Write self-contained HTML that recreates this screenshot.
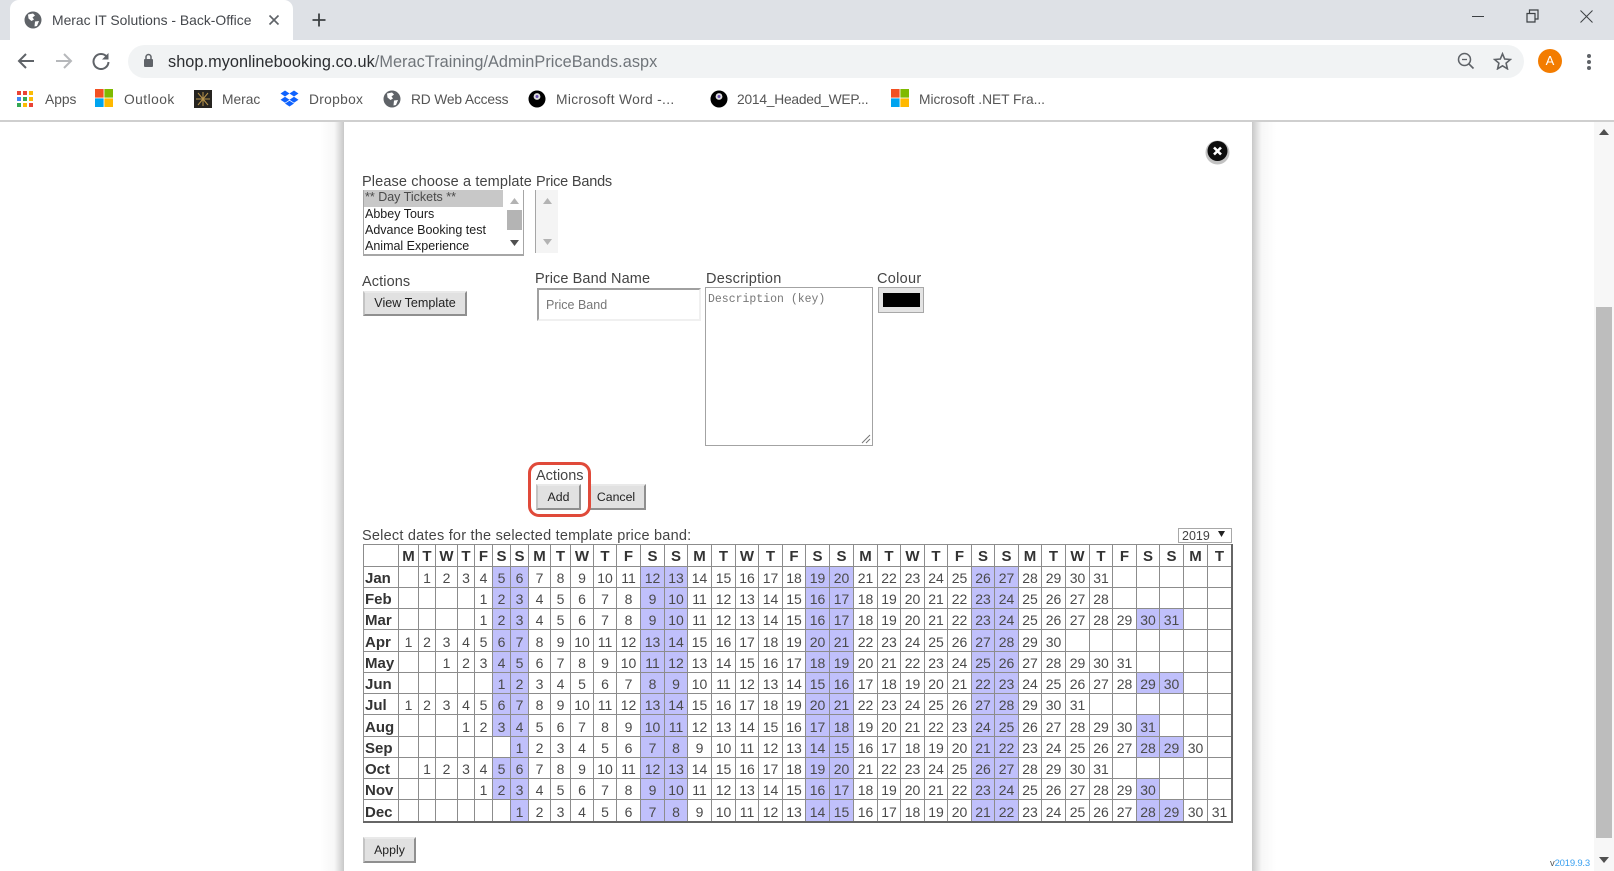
<!DOCTYPE html>
<html><head><meta charset="utf-8"><title>Merac IT Solutions - Back-Office</title>
<style>
html,body{margin:0;padding:0;background:#fff}
#r{position:relative;width:1614px;height:871px;overflow:hidden;background:#fff;font-family:"Liberation Sans",sans-serif;filter:blur(.3px)}
#r div,#r span,#r svg,#r table{position:absolute}
.t{white-space:nowrap;line-height:18px;height:18px}
.l{font-size:14.5px;color:#444}
.b{font-size:13.8px;color:#555;top:91px}
.btn{box-sizing:border-box;background:#e1e1e1;border:2px solid;border-color:#e9e9e9 #8f8f8f #8f8f8f #c4c4c4;font-size:12.3px;color:#222;text-align:center;line-height:21px}
.o{font-size:12.5px;color:#1c1c1c;left:365px}
table.c{left:363px;top:544px;width:870px;table-layout:fixed;border-collapse:separate;border-spacing:0;border-right:2px solid #666;border-bottom:2px solid #666;font-size:14px;color:#4a4a4a}
table.c td,table.c th{box-sizing:border-box;border-left:1px solid #8c8c8c;border-top:1px solid #8c8c8c;padding:3px 0 0 0;height:21px;line-height:17px;text-align:center;overflow:hidden;white-space:nowrap}
table.c tr:nth-child(4n+1) td,table.c tr:nth-child(4n+1) th{height:22px}
table.c tr:first-child th{padding-top:1px;line-height:19px}
table.c th{font-size:15px;color:#333;font-weight:bold}
table.c tr th:first-child{text-align:left;padding-left:1px}
table.c td:nth-child(7n):not(:empty),table.c td:nth-child(7n+1):not(:empty){background:#c0c0fb}
</style></head><body><div id="r">

<!-- tab strip -->
<div style="left:0;top:0;width:1614px;height:40px;background:#dee1e6"></div>
<div style="left:10px;top:0;width:283px;height:40px;background:#fff;border-radius:9px 9px 0 0"></div>
<svg style="left:24px;top:11px" width="18" height="18" viewBox="0 0 18 18"><circle cx="9" cy="9" r="8.5" fill="#5f6368"/><path d="M4 3.5 L9 2.5 L11 4.5 L8.5 6.5 L10 8.5 L7.5 10 L4.5 7.5 Z M11 10.5 L15 10 L13 15 L10.5 15.5 Z" fill="#fff"/></svg>
<span class="t" style="left:52px;top:11px;font-size:13.9px;color:#45484d">Merac IT Solutions - Back-Office</span>
<svg style="left:268px;top:14px" width="12" height="12" viewBox="0 0 12 12"><path d="M1.5 1.5 L10.5 10.5 M10.5 1.5 L1.5 10.5" stroke="#5f6368" stroke-width="1.6"/></svg>
<svg style="left:312px;top:13px" width="14" height="14" viewBox="0 0 14 14"><path d="M7 0.5 V13.5 M0.5 7 H13.5" stroke="#3c4043" stroke-width="1.8"/></svg>
<div style="left:1472px;top:16px;width:12px;height:1px;background:#3c4043"></div>
<svg style="left:1526px;top:9px" width="13" height="14" viewBox="0 0 13 14"><path d="M1 4.5 H9 V13 H1 Z M3.5 4.5 V1 H12 V10 H9" fill="none" stroke="#3c4043" stroke-width="1.2"/></svg>
<svg style="left:1580px;top:10px" width="13" height="13" viewBox="0 0 13 13"><path d="M.5 .5 L12.5 12.5 M12.5 .5 L.5 12.5" stroke="#3c4043" stroke-width="1"/></svg>

<!-- toolbar -->
<svg style="left:17px;top:52px" width="18" height="18" viewBox="0 0 18 18"><path d="M17 9 H2 M9 2 L2 9 L9 16" fill="none" stroke="#5f6368" stroke-width="2"/></svg>
<svg style="left:55px;top:52px" width="18" height="18" viewBox="0 0 18 18"><path d="M1 9 H16 M9 2 L16 9 L9 16" fill="none" stroke="#b6b8bb" stroke-width="2"/></svg>
<svg style="left:92px;top:52px" width="18" height="18" viewBox="0 0 18 18"><path d="M15 5 A7.5 7.5 0 1 0 16.5 10" fill="none" stroke="#5f6368" stroke-width="2"/><path d="M16.5 1 V7.5 H10 Z" fill="#5f6368"/></svg>
<div style="left:128px;top:45px;width:1396px;height:33px;background:#f1f3f4;border-radius:17px"></div>
<svg style="left:143px;top:53px" width="11" height="15" viewBox="0 0 11 15"><path d="M3 6 V4 A2.5 2.5 0 0 1 8 4 V6" fill="none" stroke="#5f6368" stroke-width="1.5"/><rect x="1" y="6" width="9" height="8" rx="1" fill="#5f6368"/></svg>
<span class="t" style="left:168px;top:53px;font-size:16.3px;letter-spacing:.05px;color:#2b2d30">shop.myonlinebooking.co.uk<span style="position:static;color:#70757a">/MeracTraining/AdminPriceBands.aspx</span></span>
<svg style="left:1457px;top:52px" width="18" height="18" viewBox="0 0 18 18"><circle cx="7.5" cy="7.5" r="6" fill="none" stroke="#5f6368" stroke-width="1.5"/><path d="M11.8 11.8 L16.5 16.5" stroke="#5f6368" stroke-width="1.7"/><path d="M5 7.5 H10" stroke="#5f6368" stroke-width="1.3"/></svg>
<svg style="left:1493px;top:52px" width="19" height="18" viewBox="0 0 19 18"><path d="M9.5 1.8 L11.7 7 L17.4 7.5 L13.1 11.2 L14.4 16.8 L9.5 13.8 L4.6 16.8 L5.9 11.2 L1.6 7.5 L7.3 7 Z" fill="none" stroke="#5f6368" stroke-width="1.6"/></svg>
<div style="left:1538px;top:49px;width:24px;height:24px;border-radius:50%;background:#f37c00;color:#fff;font-size:13px;line-height:24px;text-align:center">A</div>
<div style="left:1587px;top:54px;width:4px;height:4px;border-radius:50%;background:#5f6368"></div>
<div style="left:1587px;top:60px;width:4px;height:4px;border-radius:50%;background:#5f6368"></div>
<div style="left:1587px;top:66px;width:4px;height:4px;border-radius:50%;background:#5f6368"></div>

<!-- bookmarks -->
<svg style="left:17px;top:91px" width="16" height="16" viewBox="0 0 16 16"><rect x="0" y="0" width="4" height="4" fill="#ea4335"/><rect x="6" y="0" width="4" height="4" fill="#ea4335"/><rect x="12" y="0" width="4" height="4" fill="#fbbc05"/><rect x="0" y="6" width="4" height="4" fill="#4285f4"/><rect x="6" y="6" width="4" height="4" fill="#34a853"/><rect x="12" y="6" width="4" height="4" fill="#fbbc05"/><rect x="0" y="12" width="4" height="4" fill="#34a853"/><rect x="6" y="12" width="4" height="4" fill="#fbbc05"/><rect x="12" y="12" width="4" height="4" fill="#ea4335"/></svg>
<span class="t b" style="left:45px">Apps</span>
<svg style="left:95px;top:89px" width="18" height="18" viewBox="0 0 18 18"><rect width="8.6" height="8.6" fill="#f25022"/><rect x="9.4" width="8.6" height="8.6" fill="#7fba00"/><rect y="9.4" width="8.6" height="8.6" fill="#00a4ef"/><rect x="9.4" y="9.4" width="8.6" height="8.6" fill="#ffb900"/></svg>
<span class="t b" style="left:124px;letter-spacing:.45px">Outlook</span>
<svg style="left:194px;top:90px" width="18" height="18" viewBox="0 0 18 18"><rect width="18" height="18" fill="#262420"/><path d="M9 2 V16 M2 9 H16 M4 3 L14 15 M14 3 L4 15" stroke="#b8934a" stroke-width="1"/></svg>
<span class="t b" style="left:222px">Merac</span>
<svg style="left:280px;top:90px" width="19" height="17" viewBox="0 0 19 17"><path d="M5 0.5 L9.5 3.5 L5 6.5 L0.5 3.5 Z M14 0.5 L18.5 3.5 L14 6.5 L9.5 3.5 Z M5 6.8 L9.5 9.8 L5 12.8 L0.5 9.8 Z M14 6.8 L18.5 9.8 L14 12.8 L9.5 9.8 Z M5 13.5 L9.5 10.8 L14 13.5 L9.5 16.5 Z" fill="#0f62fe"/></svg>
<span class="t b" style="left:309px;letter-spacing:.3px">Dropbox</span>
<svg style="left:383px;top:90px" width="18" height="18" viewBox="0 0 18 18"><circle cx="9" cy="9" r="8.5" fill="#5f6368"/><path d="M4 3.5 L9 2.5 L11 4.5 L8.5 6.5 L10 8.5 L7.5 10 L4.5 7.5 Z M11 10.5 L15 10 L13 15 L10.5 15.5 Z" fill="#fff"/></svg>
<span class="t b" style="left:411px;letter-spacing:-.16px">RD Web Access</span>
<svg style="left:528px;top:90px" width="18" height="18" viewBox="0 0 18 18"><circle cx="9" cy="9" r="8.5" fill="#000"/><circle cx="9" cy="6.5" r="3.4" fill="#ddd"/><circle cx="9" cy="6.5" r="1.5" fill="#6a4fb0"/></svg>
<span class="t b" style="left:556px;letter-spacing:.32px">Microsoft Word -...</span>
<svg style="left:710px;top:90px" width="18" height="18" viewBox="0 0 18 18"><circle cx="9" cy="9" r="8.5" fill="#000"/><circle cx="9" cy="6.5" r="3.4" fill="#ddd"/><circle cx="9" cy="6.5" r="1.5" fill="#6a4fb0"/></svg>
<span class="t b" style="left:737px;letter-spacing:-.23px">2014_Headed_WEP...</span>
<svg style="left:891px;top:89px" width="18" height="18" viewBox="0 0 18 18"><rect width="8.6" height="8.6" fill="#f25022"/><rect x="9.4" width="8.6" height="8.6" fill="#7fba00"/><rect y="9.4" width="8.6" height="8.6" fill="#00a4ef"/><rect x="9.4" y="9.4" width="8.6" height="8.6" fill="#ffb900"/></svg>
<span class="t b" style="left:919px;letter-spacing:-.05px">Microsoft .NET Fra...</span>
<div style="left:0;top:120px;width:1614px;height:2px;background:#cfcfcf"></div>

<!-- panel shadows -->
<div style="left:320px;top:122px;width:24px;height:749px;background:linear-gradient(to right,rgba(190,190,190,0),rgba(190,190,190,.12) 60%,#c8c8c8)"></div>
<div style="left:1252px;top:122px;width:24px;height:749px;background:linear-gradient(to left,rgba(190,190,190,0),rgba(190,190,190,.12) 60%,#c8c8c8)"></div>

<!-- page scrollbar -->
<div style="left:1594px;top:122px;width:20px;height:749px;background:#f7f7f7"></div>
<div style="left:1596px;top:307px;width:16px;height:531px;background:#bdbdbd"></div>
<svg style="left:1599px;top:129px" width="10" height="6" viewBox="0 0 10 6"><path d="M5 0 L10 6 H0 Z" fill="#505050"/></svg>
<svg style="left:1599px;top:857px" width="10" height="6" viewBox="0 0 10 6"><path d="M5 6 L10 0 H0 Z" fill="#505050"/></svg>

<!-- close -->
<svg style="left:1203px;top:137px" width="28" height="28" viewBox="0 0 28 28"><ellipse cx="14.5" cy="15.5" rx="12" ry="12" fill="#999" opacity=".6"/><circle cx="14.5" cy="14" r="10" fill="#0c0c0c"/><path d="M11 10.5 L18 17.5 M18 10.5 L11 17.5" stroke="#fff" stroke-width="2.6"/></svg>

<!-- top form -->
<span class="t l" style="left:362px;top:173px;letter-spacing:.13px">Please choose a template</span>
<span class="t l" style="left:536px;top:173px;letter-spacing:-.2px">Price Bands</span>

<div style="left:363px;top:190px;width:161px;height:66px;box-sizing:border-box;border:1px solid #a6a6a6;border-top:0;border-bottom-width:2px;background:#fff"></div>
<div style="left:364px;top:190px;width:139px;height:17px;background:#c8c8c8"></div>
<span class="t o" style="top:188px;color:#4a4a4a">** Day Tickets **</span>
<span class="t o" style="top:205px">Abbey Tours</span>
<span class="t o" style="top:221px">Advance Booking test</span>
<span class="t o" style="top:237px">Animal Experience</span>
<div style="left:507px;top:210px;width:15px;height:20px;background:#b4b4b4"></div>
<svg style="left:510px;top:198px" width="9" height="6" viewBox="0 0 9 6"><path d="M4.5 0 L9 6 H0 Z" fill="#b3b3b3"/></svg>
<svg style="left:510px;top:240px" width="9" height="6" viewBox="0 0 9 6"><path d="M4.5 6 L9 0 H0 Z" fill="#505050"/></svg>

<div style="left:535px;top:190px;width:23px;height:63px;box-sizing:border-box;background:#f4f4f4;border-left:1px solid #a6a6a6"></div>
<svg style="left:543px;top:198px" width="9" height="6" viewBox="0 0 9 6"><path d="M4.5 0 L9 6 H0 Z" fill="#b3b3b3"/></svg>
<svg style="left:543px;top:239px" width="9" height="6" viewBox="0 0 9 6"><path d="M4.5 6 L9 0 H0 Z" fill="#b3b3b3"/></svg>

<span class="t l" style="left:362px;top:273px;letter-spacing:.1px">Actions</span>
<div class="btn" style="left:363px;top:291px;width:104px;height:25px;font-size:12.6px">View Template</div>

<span class="t l" style="left:535px;top:270px;letter-spacing:.1px">Price Band Name</span>
<div style="left:537px;top:288px;width:164px;height:33px;box-sizing:border-box;border:2px solid;border-color:#a0a0a0 #f0f0f0 #f0f0f0 #a0a0a0"></div>
<span class="t" style="left:546px;top:296px;font-size:12.5px;color:#777">Price Band</span>

<span class="t l" style="left:706px;top:270px;letter-spacing:.28px">Description</span>
<div style="left:705px;top:287px;width:168px;height:159px;box-sizing:border-box;border:1px solid #a3a3a3"></div>
<span class="t" style="left:708px;top:291px;font-size:11.5px;color:#777;font-family:'Liberation Mono',monospace">Description (key)</span>
<svg style="left:861px;top:434px" width="10" height="10" viewBox="0 0 10 10"><path d="M9 1 L1 9 M9 5 L5 9" stroke="#777" stroke-width="1"/></svg>

<span class="t l" style="left:877px;top:270px;letter-spacing:.3px">Colour</span>
<div style="left:878px;top:287px;width:46px;height:26px;box-sizing:border-box;background:#e4e4e4;border:1px solid #a8a8a8"></div>
<div style="left:883px;top:293px;width:37px;height:14px;background:#000"></div>

<!-- Actions highlighted -->
<span class="t l" style="left:536px;top:467px">Actions</span>
<div class="btn" style="left:536px;top:484px;width:45px;height:26px;line-height:23px">Add</div>
<div class="btn" style="left:589px;top:484px;width:57px;height:26px;line-height:23px;padding-right:3px">Cancel</div>
<div style="left:528px;top:462px;width:63px;height:55px;box-sizing:border-box;border:3px solid #e04a3a;border-radius:11px"></div>

<span class="t l" style="left:362px;top:527px;letter-spacing:.22px">Select dates for the selected template price band:</span>
<div style="left:1178px;top:528px;width:54px;height:15px;box-sizing:border-box;border:1px solid #a8a8a8;background:#fff"></div>
<span class="t" style="left:1182px;top:527px;font-size:12.5px;color:#444">2019</span>
<svg style="left:1218px;top:531px" width="7" height="6" viewBox="0 0 7 6"><path d="M3.5 6 L7 0 H0 Z" fill="#222"/></svg>

<!-- calendar -->
<table class="c"><colgroup><col style="width:35px"><col style="width:20px"><col style="width:17px"><col style="width:22px"><col style="width:17px"><col style="width:18px"><col style="width:18px"><col style="width:18px"><col style="width:22px"><col style="width:20px"><col style="width:23px"><col style="width:23px"><col style="width:24px"><col style="width:24px"><col style="width:23px"><col style="width:24px"><col style="width:24px"><col style="width:23px"><col style="width:24px"><col style="width:23px"><col style="width:24px"><col style="width:24px"><col style="width:24px"><col style="width:23px"><col style="width:24px"><col style="width:23px"><col style="width:24px"><col style="width:23px"><col style="width:24px"><col style="width:23px"><col style="width:24px"><col style="width:24px"><col style="width:23px"><col style="width:24px"><col style="width:23px"><col style="width:24px"><col style="width:24px"><col style="width:24px"></colgroup>
<tr><th></th><th>M</th><th>T</th><th>W</th><th>T</th><th>F</th><th>S</th><th>S</th><th>M</th><th>T</th><th>W</th><th>T</th><th>F</th><th>S</th><th>S</th><th>M</th><th>T</th><th>W</th><th>T</th><th>F</th><th>S</th><th>S</th><th>M</th><th>T</th><th>W</th><th>T</th><th>F</th><th>S</th><th>S</th><th>M</th><th>T</th><th>W</th><th>T</th><th>F</th><th>S</th><th>S</th><th>M</th><th>T</th></tr>
<tr><th>Jan</th><td></td><td>1</td><td>2</td><td>3</td><td>4</td><td>5</td><td>6</td><td>7</td><td>8</td><td>9</td><td>10</td><td>11</td><td>12</td><td>13</td><td>14</td><td>15</td><td>16</td><td>17</td><td>18</td><td>19</td><td>20</td><td>21</td><td>22</td><td>23</td><td>24</td><td>25</td><td>26</td><td>27</td><td>28</td><td>29</td><td>30</td><td>31</td><td></td><td></td><td></td><td></td><td></td></tr>
<tr><th>Feb</th><td></td><td></td><td></td><td></td><td>1</td><td>2</td><td>3</td><td>4</td><td>5</td><td>6</td><td>7</td><td>8</td><td>9</td><td>10</td><td>11</td><td>12</td><td>13</td><td>14</td><td>15</td><td>16</td><td>17</td><td>18</td><td>19</td><td>20</td><td>21</td><td>22</td><td>23</td><td>24</td><td>25</td><td>26</td><td>27</td><td>28</td><td></td><td></td><td></td><td></td><td></td></tr>
<tr><th>Mar</th><td></td><td></td><td></td><td></td><td>1</td><td>2</td><td>3</td><td>4</td><td>5</td><td>6</td><td>7</td><td>8</td><td>9</td><td>10</td><td>11</td><td>12</td><td>13</td><td>14</td><td>15</td><td>16</td><td>17</td><td>18</td><td>19</td><td>20</td><td>21</td><td>22</td><td>23</td><td>24</td><td>25</td><td>26</td><td>27</td><td>28</td><td>29</td><td>30</td><td>31</td><td></td><td></td></tr>
<tr><th>Apr</th><td>1</td><td>2</td><td>3</td><td>4</td><td>5</td><td>6</td><td>7</td><td>8</td><td>9</td><td>10</td><td>11</td><td>12</td><td>13</td><td>14</td><td>15</td><td>16</td><td>17</td><td>18</td><td>19</td><td>20</td><td>21</td><td>22</td><td>23</td><td>24</td><td>25</td><td>26</td><td>27</td><td>28</td><td>29</td><td>30</td><td></td><td></td><td></td><td></td><td></td><td></td><td></td></tr>
<tr><th>May</th><td></td><td></td><td>1</td><td>2</td><td>3</td><td>4</td><td>5</td><td>6</td><td>7</td><td>8</td><td>9</td><td>10</td><td>11</td><td>12</td><td>13</td><td>14</td><td>15</td><td>16</td><td>17</td><td>18</td><td>19</td><td>20</td><td>21</td><td>22</td><td>23</td><td>24</td><td>25</td><td>26</td><td>27</td><td>28</td><td>29</td><td>30</td><td>31</td><td></td><td></td><td></td><td></td></tr>
<tr><th>Jun</th><td></td><td></td><td></td><td></td><td></td><td>1</td><td>2</td><td>3</td><td>4</td><td>5</td><td>6</td><td>7</td><td>8</td><td>9</td><td>10</td><td>11</td><td>12</td><td>13</td><td>14</td><td>15</td><td>16</td><td>17</td><td>18</td><td>19</td><td>20</td><td>21</td><td>22</td><td>23</td><td>24</td><td>25</td><td>26</td><td>27</td><td>28</td><td>29</td><td>30</td><td></td><td></td></tr>
<tr><th>Jul</th><td>1</td><td>2</td><td>3</td><td>4</td><td>5</td><td>6</td><td>7</td><td>8</td><td>9</td><td>10</td><td>11</td><td>12</td><td>13</td><td>14</td><td>15</td><td>16</td><td>17</td><td>18</td><td>19</td><td>20</td><td>21</td><td>22</td><td>23</td><td>24</td><td>25</td><td>26</td><td>27</td><td>28</td><td>29</td><td>30</td><td>31</td><td></td><td></td><td></td><td></td><td></td><td></td></tr>
<tr><th>Aug</th><td></td><td></td><td></td><td>1</td><td>2</td><td>3</td><td>4</td><td>5</td><td>6</td><td>7</td><td>8</td><td>9</td><td>10</td><td>11</td><td>12</td><td>13</td><td>14</td><td>15</td><td>16</td><td>17</td><td>18</td><td>19</td><td>20</td><td>21</td><td>22</td><td>23</td><td>24</td><td>25</td><td>26</td><td>27</td><td>28</td><td>29</td><td>30</td><td>31</td><td></td><td></td><td></td></tr>
<tr><th>Sep</th><td></td><td></td><td></td><td></td><td></td><td></td><td>1</td><td>2</td><td>3</td><td>4</td><td>5</td><td>6</td><td>7</td><td>8</td><td>9</td><td>10</td><td>11</td><td>12</td><td>13</td><td>14</td><td>15</td><td>16</td><td>17</td><td>18</td><td>19</td><td>20</td><td>21</td><td>22</td><td>23</td><td>24</td><td>25</td><td>26</td><td>27</td><td>28</td><td>29</td><td>30</td><td></td></tr>
<tr><th>Oct</th><td></td><td>1</td><td>2</td><td>3</td><td>4</td><td>5</td><td>6</td><td>7</td><td>8</td><td>9</td><td>10</td><td>11</td><td>12</td><td>13</td><td>14</td><td>15</td><td>16</td><td>17</td><td>18</td><td>19</td><td>20</td><td>21</td><td>22</td><td>23</td><td>24</td><td>25</td><td>26</td><td>27</td><td>28</td><td>29</td><td>30</td><td>31</td><td></td><td></td><td></td><td></td><td></td></tr>
<tr><th>Nov</th><td></td><td></td><td></td><td></td><td>1</td><td>2</td><td>3</td><td>4</td><td>5</td><td>6</td><td>7</td><td>8</td><td>9</td><td>10</td><td>11</td><td>12</td><td>13</td><td>14</td><td>15</td><td>16</td><td>17</td><td>18</td><td>19</td><td>20</td><td>21</td><td>22</td><td>23</td><td>24</td><td>25</td><td>26</td><td>27</td><td>28</td><td>29</td><td>30</td><td></td><td></td><td></td></tr>
<tr><th>Dec</th><td></td><td></td><td></td><td></td><td></td><td></td><td>1</td><td>2</td><td>3</td><td>4</td><td>5</td><td>6</td><td>7</td><td>8</td><td>9</td><td>10</td><td>11</td><td>12</td><td>13</td><td>14</td><td>15</td><td>16</td><td>17</td><td>18</td><td>19</td><td>20</td><td>21</td><td>22</td><td>23</td><td>24</td><td>25</td><td>26</td><td>27</td><td>28</td><td>29</td><td>30</td><td>31</td></tr>
</table>

<div class="btn" style="left:363px;top:837px;width:53px;height:26px;line-height:23px">Apply</div>
<span class="t" style="left:1550px;top:855px;font-size:9.5px;letter-spacing:-.2px;color:#555">v<span style="position:static;color:#3aa0f0">2019.9.3</span></span>

</div></body></html>
